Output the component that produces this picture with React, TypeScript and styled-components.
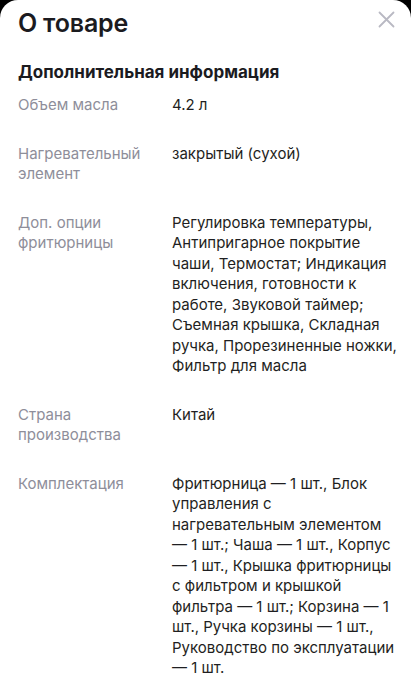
import React from "react";
import styled, { createGlobalStyle } from "styled-components";

const GlobalStyle = createGlobalStyle`
  html, body {
    margin: 0;
    padding: 0;
    background: #000;
  }
  body {
    font-family: Inter, "Noto Sans", "Liberation Sans", sans-serif;
    -webkit-font-smoothing: antialiased;
  }
  * { box-sizing: border-box; }
`;

const Sheet = styled.div`
  background: #fff;
  border-radius: 18px 18px 0 0;
  min-height: 699px;
  padding: 9px 12px 24px 18px;
`;

const Header = styled.div`
  display: flex;
  align-items: flex-start;
  justify-content: space-between;
`;

const Title = styled.h1`
  margin: 0;
  font-size: 25px;
  line-height: 28px;
  font-weight: 600;
  color: #1b1b1f;
  letter-spacing: -0.2px;
`;

const CloseButton = styled.button`
  border: 0;
  background: none;
  padding: 0;
  margin: 1px 4px 0 0;
  width: 18px;
  height: 18px;
  display: flex;
  align-items: center;
  justify-content: center;
  color: #b9b9c3;
  cursor: pointer;
`;

const SectionTitle = styled.h2`
  margin: 24px 0 12px;
  font-size: 17px;
  line-height: 22px;
  font-weight: 650;
  color: #1b1b1f;
`;

const List = styled.dl`
  margin: 0;
  display: flex;
  flex-direction: column;
  gap: 28px;
`;

const Row = styled.div`
  display: grid;
  grid-template-columns: 154px 1fr;
  font-size: 15px;
  line-height: 20.5px;
`;

const Label = styled.dt`
  margin: 0;
  color: #8e8e9a;
  padding-right: 12px;
`;

const Value = styled.dd`
  margin: 0;
  color: #1f1f22;
`;

const rows: { label: string; value: string }[] = [
  { label: "Объем масла", value: "4.2 л" },
  { label: "Нагревательный элемент", value: "закрытый (сухой)" },
  {
    label: "Доп. опции фритюрницы",
    value:
      "Регулировка температуры, Антипригарное покрытие чаши, Термостат; Индикация включения, готовности к работе, Звуковой таймер; Съемная крышка, Складная ручка, Прорезиненные ножки, Фильтр для масла",
  },
  { label: "Страна производства", value: "Китай" },
  {
    label: "Комплектация",
    value:
      "Фритюрница — 1 шт., Блок управления с нагревательным\u00a0элементом — 1 шт.; Чаша — 1 шт., Корпус — 1 шт., Крышка фритюрницы с фильтром и крышкой фильтра — 1 шт.; Корзина — 1 шт., Ручка корзины — 1 шт., Руководство по эксплуатации — 1 шт.",
  },
];

export default function App() {
  return (
    <>
      <GlobalStyle />
      <Sheet>
        <Header>
          <Title>О товаре</Title>
          <CloseButton aria-label="Закрыть">
            <svg width="17" height="17" viewBox="0 0 17 17" fill="none">
              <path d="M1.5 1.5L15.5 15.5M15.5 1.5L1.5 15.5" stroke="currentColor" strokeWidth="1.8" strokeLinecap="round" />
            </svg>
          </CloseButton>
        </Header>
        <SectionTitle>Дополнительная информация</SectionTitle>
        <List>
          {rows.map((r) => (
            <Row key={r.label}>
              <Label>{r.label}</Label>
              <Value>{r.value}</Value>
            </Row>
          ))}
        </List>
      </Sheet>
    </>
  );
}
